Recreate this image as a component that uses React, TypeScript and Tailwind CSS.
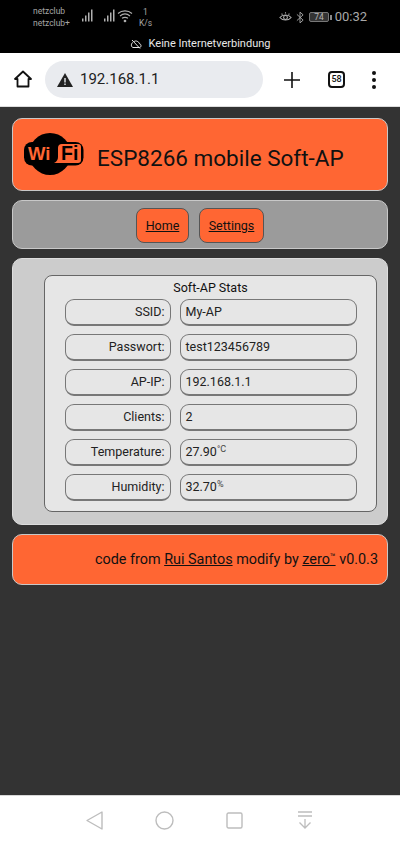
import React from "react";

const rows: [string, React.ReactNode][] = [
  ["SSID:", "My-AP"],
  ["Passwort:", "test123456789"],
  ["AP-IP:", "192.168.1.1"],
  ["Clients:", "2"],
  ["Temperature:", <>27.90<sup className="text-[9px] text-[#444] top-[-4px] align-baseline relative">°C</sup></>],
  ["Humidity:", <>32.70<sup className="text-[9px] text-[#444] top-[-4px] align-baseline relative">%</sup></>],
];

function Signal() {
  const hs = [3, 6, 9, 12];
  return (
    <svg width="13" height="13" viewBox="0 0 13 13" fill="#b0b0b0">
      {hs.map((h, i) => (
        <rect key={i} x={1 + i * 3} y={12.5 - h} width="1.5" height={h} />
      ))}
    </svg>
  );
}

function WifiLogo() {
  return (
    <svg width="60" height="43" viewBox="0 0 60 43" className="shrink-0">
      <ellipse cx="26" cy="21" rx="21" ry="21" fill="#000" />
      <rect x="0" y="9" width="59.5" height="23.5" rx="8" fill="#000" />
      <path d="M38 11 H54 a3 3 0 0 1 3 3 V27 a3 3 0 0 1 -3 3 H30 q4 -2 4 -6 V15 a4 4 0 0 1 4 -4 Z" fill="#ff6633" />
      <text x="4" y="27" fontFamily="'Liberation Sans', sans-serif" fontWeight="700" fontSize="18.5" fill="#ff6633">Wi</text>
      <text x="37" y="27" fontFamily="'Liberation Sans', sans-serif" fontWeight="700" fontSize="19.5" fill="#000">Fi</text>
    </svg>
  );
}

export default function App() {
  return (
    <div className="w-[400px] h-[844px] flex flex-col overflow-hidden bg-[#333333] font-['Roboto',sans-serif]">
      <div className="h-[53px] bg-black flex flex-col shrink-0">
        <div className="h-[35px] flex items-start relative">
          <div className="ml-[33px] mt-[5px] text-[8.5px] leading-[12px] text-[#a5a5a5]">
            <div>netzclub</div>
            <div>netzclub+</div>
          </div>
          <div className="flex items-center mt-[9px] ml-[11px] gap-[9px]">
            <Signal />
            <Signal />
          </div>
          <svg width="16" height="14" viewBox="0 0 16 14" fill="none" stroke="#b0b0b0" strokeWidth="1.1" className="mt-[9px] ml-[1px]">
            <path d="M1 4.5 C5 1 11 1 15 4.5" />
            <path d="M3 7 C6 4.5 10 4.5 13 7" />
            <path d="M5 9.3 C7 8 9 8 11 9.3" />
            <circle cx="8" cy="12" r="0.8" fill="#b0b0b0" />
          </svg>
          <div className="ml-[6px] mt-[7px] text-[8.5px] leading-[11px] text-[#a5a5a5] text-center w-[13px]">
            <div>1</div>
            <div>K/s</div>
          </div>
          <div className="flex-1" />
          <svg width="13" height="13" viewBox="0 0 15 13" fill="none" stroke="#b0b0b0" strokeWidth="1.2" className="mt-[11px]">
            <path d="M1 6.5 C4 2.5 11 2.5 14 6.5 C11 10.5 4 10.5 1 6.5Z" />
            <circle cx="7.5" cy="6.5" r="2.2" />
            <path d="M3 2 L4 3.2 M7.5 0.5 V2 M12 2 L11 3.2" />
          </svg>
          <svg width="8" height="13" viewBox="0 0 9 14" fill="none" stroke="#b0b0b0" strokeWidth="1" className="mt-[11px] ml-[4px]">
            <path d="M1 3.5 L8 10 L4.5 13 V1 L8 4 L1 10.5" />
          </svg>
          <div className="ml-[5px] mt-[12px] w-[20px] h-[10px] border border-[#777] rounded-[2px] flex items-center justify-center bg-[#333] text-[8.5px] leading-none text-[#b5b5b5]">74</div>
          <div className="w-[1.5px] h-[5px] mt-[15px] bg-[#888] ml-[1px]" />
          <div className="ml-[3px] mr-[33px] mt-[9px] text-[13px] leading-[16px] text-[#a8a8a8]">00:32</div>
        </div>
        <div className="flex items-center justify-center gap-[7px] h-[18px] text-[11px] text-[#e8e8e8]">
          <svg width="12" height="10" viewBox="0 0 12 10" fill="none" stroke="#e8e8e8" strokeWidth="1">
            <path d="M3 3.5 C1 4 0.7 8 3 8.5 H9.5 C11.5 8.5 11.5 5 9.5 4.8 C9 2.5 5.5 1 4 2.7" />
            <path d="M2 1 L10 9.5" />
          </svg>
          <span>Keine Internetverbindung</span>
        </div>
      </div>

      <div className="h-[54px] bg-white flex items-center shrink-0 border-b border-[#dddddd]">
        <svg width="18" height="18" viewBox="0 0 18 18" fill="none" stroke="#111" strokeWidth="1.8" strokeLinejoin="round" className="ml-[14px] mt-[-2px]">
          <path d="M9 1.5 L1 9 H3.5 V16.5 H14.5 V9 H17 Z" />
        </svg>
        <div className="ml-[13px] w-[218px] h-[37px] rounded-full bg-[#e9ebef] flex items-center">
          <svg width="16" height="14" viewBox="0 0 16 14" className="ml-[12px]">
            <path d="M8 0 L16 14 H0 Z" fill="#222" />
            <rect x="7.3" y="5" width="1.4" height="4.5" fill="#e9ebef" />
            <rect x="7.3" y="10.5" width="1.4" height="1.5" fill="#e9ebef" />
          </svg>
          <span className="ml-[7px] text-[15px] text-[#222]">192.168.1.1</span>
        </div>
        <svg width="16" height="16" viewBox="0 0 16 16" stroke="#111" strokeWidth="1.6" className="ml-[21px]">
          <path d="M8 0 V16 M0 8 H16" />
        </svg>
        <div className="ml-[28px] w-[17px] h-[17px] border-2 border-[#111] rounded-[4px] flex items-center justify-center text-[9px] font-medium text-[#111] leading-none">58</div>
        <div className="ml-[27px] flex flex-col gap-[3px]">
          <div className="w-[4px] h-[4px] rounded-full bg-[#111]" />
          <div className="w-[4px] h-[4px] rounded-full bg-[#111]" />
          <div className="w-[4px] h-[4px] rounded-full bg-[#111]" />
        </div>
      </div>

      <div className="flex-1 flex flex-col gap-[9px] px-[12px] pt-[11px]">
        <div className="h-[73px] rounded-[10px] bg-[#ff6633] border border-[#c8c8c8] flex items-center pl-[11px]">
          <WifiLogo />
          <span className="ml-[13px] pt-[8px] text-[22.5px] text-[#111]">ESP8266 mobile Soft-AP</span>
        </div>

        <div className="h-[49px] rounded-[10px] bg-[#9b9b9b] border border-[#c8c8c8] pt-[2px] flex items-center justify-center gap-[10px]">
          <a className="h-[35px] w-[53px] rounded-[8px] bg-[#ff6633] border border-[#555] pt-[1px] flex items-center justify-center text-[12.5px] text-[#111] underline">Home</a>
          <a className="h-[35px] w-[65px] rounded-[8px] bg-[#ff6633] border border-[#555] pt-[1px] flex items-center justify-center text-[12.5px] text-[#111] underline">Settings</a>
        </div>

        <div className="h-[267px] rounded-[10px] bg-[#cccccc] border border-[#dddddd] pl-[31px] pr-[10px] pt-[16px]">
          <div className="w-[333px] h-[237px] rounded-[8px] bg-[#e6e6e6] border border-[#666] flex flex-col items-center">
            <div className="h-[23px] pt-[2px] shrink-0 flex items-center text-[12.5px] text-[#111]">Soft-AP Stats</div>
            <div className="flex flex-col gap-[8px]">
              {rows.map(([label, value], i) => (
                <div key={i} className="flex gap-[9px]">
                  <div className="w-[106px] h-[27px] rounded-[9px] border border-b-2 border-[#777] flex items-center justify-end pr-[5px] text-[12.5px] text-[#222]">{label}</div>
                  <div className="w-[177px] h-[27px] rounded-[9px] border border-b-2 border-[#777] flex items-center pl-[5px] text-[12.5px] text-[#222]">
                    <span>{value}</span>
                  </div>
                </div>
              ))}
            </div>
          </div>
        </div>

        <div className="h-[51px] rounded-[10px] bg-[#ff6633] border border-[#c8c8c8] flex items-center justify-end pr-[9px] text-[14.4px] text-[#111]">
          <span>code from <a className="underline">Rui Santos</a> modify by <a className="underline">zero<sup className="text-[9px] top-[-4px] align-baseline relative">™</sup></a> v0.0.3</span>
        </div>
      </div>

      <div className="h-[49px] bg-white border-t border-[#d8d8d8] shrink-0 flex items-center pl-[86px]">
        <svg width="17" height="19" viewBox="0 0 17 19" fill="none" stroke="#bdbdbd" strokeWidth="1.4" strokeLinejoin="round">
          <path d="M16 1 V18 L1 9.5 Z" />
        </svg>
        <svg width="19" height="19" viewBox="0 0 19 19" fill="none" stroke="#bdbdbd" strokeWidth="1.4" className="ml-[52px]">
          <circle cx="9.5" cy="9.5" r="8.5" />
        </svg>
        <svg width="17" height="17" viewBox="0 0 17 17" fill="none" stroke="#bdbdbd" strokeWidth="1.4" className="ml-[52px]">
          <rect x="1" y="1" width="15" height="15" rx="1.5" />
        </svg>
        <svg width="16" height="18" viewBox="0 0 16 18" fill="none" stroke="#bdbdbd" strokeWidth="1.3" className="ml-[54px]">
          <path d="M1 1 H15 M1 5 H15 M8 8 V17 M2.5 11.5 L8 17 L13.5 11.5" />
        </svg>
      </div>
    </div>
  );
}
